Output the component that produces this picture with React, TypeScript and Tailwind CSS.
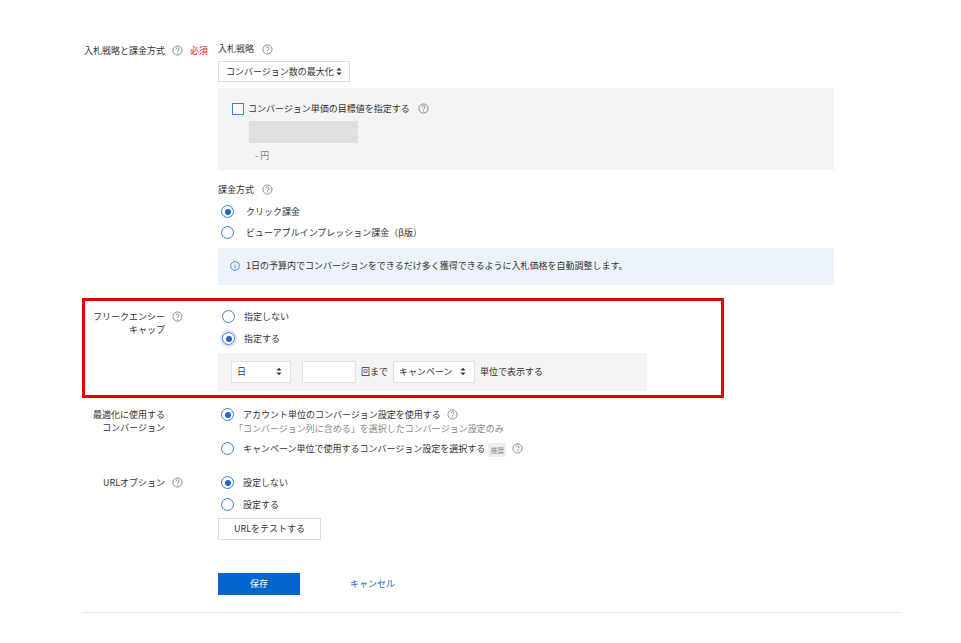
import React from "react";

const Help = ({ className = "" }: { className?: string }) => (
  <svg width="11" height="11" viewBox="0 0 12 12" className={"inline-block shrink-0 " + className}>
    <circle cx="6" cy="6" r="5" fill="none" stroke="#777" strokeWidth="0.9" />
    <path d="M4.4 4.7a1.6 1.6 0 1 1 2.3 1.4c-.5.3-.7.5-.7 1.1" fill="none" stroke="#777" strokeWidth="0.9" />
    <circle cx="6" cy="8.8" r="0.55" fill="#777" />
  </svg>
);

const Radio = ({ on }: { on?: boolean }) => (
  <span className="inline-flex items-center justify-center w-[13px] h-[13px] rounded-full border border-[#3b82d6] bg-white shrink-0">
    {on && <span className="w-[6px] h-[6px] rounded-full bg-[#1a66c9]" />}
  </span>
);

const Arrows = () => (
  <svg width="6" height="9" viewBox="0 0 6 9" className="shrink-0">
    <path d="M0.5 3.5L3 0.8 5.5 3.5z M0.5 5.5L3 8.2 5.5 5.5z" fill="#333" />
  </svg>
);

const Label = ({ lines, help = true, req = false }: { lines: string[]; help?: boolean; req?: boolean }) => (
  <div className="w-[136px] shrink-0 flex items-start">
    <div className="w-[83px] text-right leading-[13px]">
      {lines.map((l, i) => (
        <div key={i}>{l}</div>
      ))}
    </div>
    {help && <Help className="ml-[7px] mt-[1px]" />}
    {req && <span className="ml-[7px] text-[#e02020]">必須</span>}
  </div>
);

export default function App() {
  return (
    <div
      className="w-[961px] h-[643px] bg-white text-[9px] text-[#333] relative"
      style={{ fontFamily: '"Noto Sans CJK JP", "Noto Sans", sans-serif' }}
    >
      <div className="pl-[82px] pt-[43px] w-[900px]">
        {/* Row 1 */}
        <div className="flex">
          <div className="pt-[1px]"><Label lines={["入札戦略と課金方式"]} req /></div>
          <div className="flex-1 pr-[66px]">
            <div className="flex items-center gap-[8px] h-[12px]">
              <span>入札戦略</span>
              <Help />
            </div>
            <div className="mt-[6px] w-[132px] h-[21px] border border-[#ddd] flex items-center px-[7px] justify-between">
              <span>コンバージョン数の最大化</span>
              <Arrows />
            </div>
            <div className="mt-[6px] h-[82px] bg-[#f4f4f4] pl-[14px] pt-[14px]">
              <div className="flex items-center">
                <span className="w-[12px] h-[12px] border border-[#3b82d6] bg-white" />
                <span className="ml-[4px]">コンバージョン単価の目標値を指定する</span>
                <Help className="ml-[8px]" />
              </div>
              <div className="ml-[17px] mt-[5px] w-[109px] h-[22px] bg-[#e0e0e0]" />
              <div className="ml-[23px] mt-[6px] text-[#888]">- 円</div>
            </div>
            <div className="mt-[13px] flex items-center gap-[8px]">
              <span>課金方式</span>
              <Help />
            </div>
            <div className="mt-[8px] flex items-center h-[14px] pl-[3px]">
              <Radio on />
              <span className="ml-[12px]">クリック課金</span>
            </div>
            <div className="mt-[7px] flex items-center h-[14px] pl-[3px]">
              <Radio />
              <span className="ml-[12px]">ビューアブルインプレッション課金（β版）</span>
            </div>
            <div className="mt-[8px] h-[37px] bg-[#edf3fa] flex items-center pl-[12px]">
              <svg width="10" height="10" viewBox="0 0 10 10">
                <circle cx="5" cy="5" r="4.3" fill="none" stroke="#2f6fc4" strokeWidth="0.8" />
                <rect x="4.6" y="4.2" width="0.8" height="3.2" fill="#2f6fc4" />
                <circle cx="5" cy="2.9" r="0.5" fill="#2f6fc4" />
              </svg>
              <span className="ml-[6px]">1日の予算内でコンバージョンをできるだけ多く獲得できるように入札価格を自動調整します。</span>
            </div>
          </div>
        </div>

        {/* Frequency cap */}
        <div className="mt-[13px] w-[642px] h-[100px] border-[3px] border-[#ee0000] flex pt-[9px] -ml-[0px]">
          <div className="-ml-[3px]"><Label lines={["フリークエンシー", "キャップ"]} /></div>
          <div className="flex-1">
            <div className="flex items-center h-[14px] pl-[4px]">
              <Radio />
              <span className="ml-[9px]">指定しない</span>
            </div>
            <div className="mt-[8px] flex items-center h-[14px] pl-[4px]">
              <span className="rounded-full ring-2 ring-[#d6e6f8] inline-flex"><Radio on /></span>
              <span className="ml-[9px]">指定する</span>
            </div>
            <div className="mt-[7px] w-[429px] h-[38px] bg-[#f4f4f4] flex items-center pl-[13px]">
              <div className="w-[60px] h-[22px] bg-white border border-[#e2e2e2] flex items-center justify-between px-[5px] pr-[8px]">
                <span>日</span>
                <Arrows />
              </div>
              <div className="ml-[11px] w-[54px] h-[22px] bg-white border border-[#e2e2e2]" />
              <span className="ml-[5px]">回まで</span>
              <div className="ml-[5px] w-[82px] h-[22px] bg-white border border-[#e2e2e2] flex items-center justify-between px-[5px] pr-[8px]">
                <span>キャンペーン</span>
                <Arrows />
              </div>
              <span className="ml-[5px]">単位で表示する</span>
            </div>
          </div>
        </div>

        {/* Optimization */}
        <div className="mt-[10px] flex">
          <Label lines={["最適化に使用する", "コンバージョン"]} help={false} />
          <div className="flex-1">
            <div className="flex items-center h-[14px] pl-[3px]">
              <Radio on />
              <span className="ml-[9px]">アカウント単位のコンバージョン設定を使用する</span>
              <Help className="ml-[6px]" />
            </div>
            <div className="pl-[16px] text-[#888] leading-[13px]">「コンバージョン列に含める」を選択したコンバージョン設定のみ</div>
            <div className="mt-[6px] flex items-center h-[16px] pl-[3px]">
              <Radio />
              <span className="ml-[9px]">キャンペーン単位で使用するコンバージョン設定を選択する</span>
              <span className="ml-[3px] bg-[#eee] text-[#888] text-[7px] px-[2px] py-[2px] mt-[3px]">推奨</span>
              <Help className="ml-[6px]" />
            </div>
          </div>
        </div>

        {/* URL option */}
        <div className="mt-[19px] flex">
          <div className="w-[136px] flex items-start">
            <span className="ml-[21px]">URLオプション</span>
            <Help className="ml-[7px] mt-[1px]" />
          </div>
          <div className="flex-1">
            <div className="flex items-center h-[14px] pl-[3px]">
              <Radio on />
              <span className="ml-[9px]">設定しない</span>
            </div>
            <div className="mt-[8px] flex items-center h-[14px] pl-[3px]">
              <Radio />
              <span className="ml-[9px]">設定する</span>
            </div>
            <div className="mt-[6px] w-[103px] h-[22px] border border-[#ddd] flex items-center justify-center">URLをテストする</div>
          </div>
        </div>

        {/* Buttons */}
        <div className="mt-[33px] pl-[136px] flex items-center">
          <button className="w-[82px] h-[22px] bg-[#0066cc] text-white text-[9px]">保存</button>
          <span className="ml-[50px] text-[#1a66c9]">キャンセル</span>
        </div>
        <div className="mt-[17px] h-px bg-[#e6e6e6] w-[818px]" />
      </div>
    </div>
  );
}
